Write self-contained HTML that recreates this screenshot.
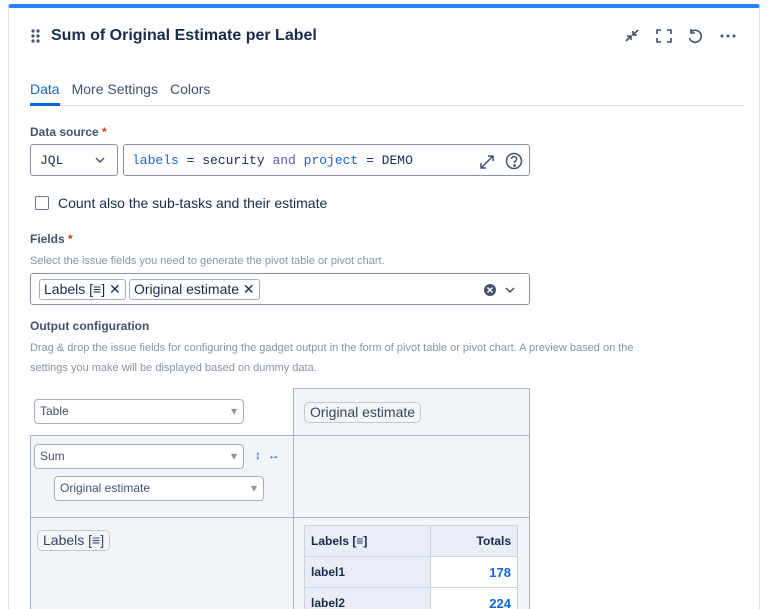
<!DOCTYPE html>
<html style="width:768px;height:609px;overflow:hidden"><head><meta charset="utf-8"><style>
*{box-sizing:border-box;margin:0;padding:0}
body{width:768px;height:609px;overflow:hidden;background:#fff;font-family:"Liberation Sans",sans-serif;color:#172b4d;position:relative}
.card{position:absolute;left:8px;top:4px;width:752px;height:605px;border:1px solid #dfe1e6;border-bottom:none;border-top:4px solid #2684ff;border-radius:3px 3px 0 0;background:#fff}
.abs{position:absolute}
.title{left:51px;top:27px;font-size:16px;font-weight:bold;color:#172b4d}
.tabs{left:30px;top:81px;font-size:14px;color:#42526e}
.tabs span{margin-right:12px}
.tabline{left:30px;top:105px;width:714px;height:1px;background:#dfe1e6}
.lbl{font-size:12px;font-weight:bold;color:#42526e}
.req{color:#de350b}
.box{border:1px solid #8993a4;border-radius:3px;background:#fff}
.mono{font-family:"Liberation Mono",monospace;font-size:13px}
.help{font-size:11px;color:#8993a4;line-height:20px}
.tag{border:1px solid #a5adba;border-radius:3px;padding:0 4px;font-size:14px;color:#172b4d;height:21px;line-height:19px;display:inline-block}
.sel{border:1px solid #a5adba;border-radius:4px;background:#fff;font-size:12px;color:#42526e;padding-left:5px;line-height:23px;height:25px}
.sel::after{content:"▾";position:absolute;right:6px;top:0;color:#8993a4;font-size:12px}
.cell{background:#f1f4f9;border:1px solid #a5b2c8}
.chip{border:1px solid #c1c7d0;border-radius:5px;background:#f4f5f7;font-size:14px;padding:0 5px;height:21px;line-height:19px;color:#344563}
table{border-collapse:collapse;font-size:12px;font-weight:bold}
td{border:1px solid #c8d2e1;height:31px;padding:0 6px}
</style></head><body>
<div class="card"></div>
<div class="abs" style="left:31px;top:29px;width:10px;height:14px">
<svg width="10" height="14"><g fill="#42526e"><circle cx="2" cy="2" r="1.6"/><circle cx="7" cy="2" r="1.6"/><circle cx="2" cy="7" r="1.6"/><circle cx="7" cy="7" r="1.6"/><circle cx="2" cy="12" r="1.6"/><circle cx="7" cy="12" r="1.6"/></g></svg></div>
<div class="abs title">Sum of Original Estimate per Label</div>
<svg class="abs" style="left:622px;top:27px" width="120" height="18" fill="none" stroke="#42526e" stroke-width="1.6">
<path d="M4 14l5-5M5 9h4v4M16 3l-5 5M11 4v4h4"/>
<path d="M35 7V3h4M45 3h4v4M49 11v4h-4M39 15h-4v-4"/>
<path d="M69 5a6 6 0 1 1-1.5 6M69 2v4h4"/>
<g fill="#42526e" stroke="none"><circle cx="100" cy="9" r="1.5"/><circle cx="106" cy="9" r="1.5"/><circle cx="112" cy="9" r="1.5"/></g>
</svg>
<div class="abs tabs"><span style="color:#0c66e4">Data</span><span>More Settings</span><span>Colors</span></div>
<div class="abs tabline"></div>
<div class="abs" style="left:30px;top:103px;width:30px;height:3px;background:#0c66e4"></div>
<div class="abs lbl" style="left:30px;top:125px">Data source <span class="req">*</span></div>
<div class="abs box" style="left:30px;top:144px;width:88px;height:32px"><span class="abs mono" style="left:9px;top:8px">JQL</span><svg class="abs" style="left:64px;top:11px" width="10" height="8"><path d="M1 2l4 4 4-4" fill="none" stroke="#42526e" stroke-width="1.4"/></svg></div>
<div class="abs box" style="left:123px;top:144px;width:407px;height:32px"><span class="abs mono" style="left:8px;top:8px"><span style="color:#0c66e4">labels</span> = security <span style="color:#6554c0">and</span> <span style="color:#0c66e4">project</span> = DEMO</span>
<svg class="abs" style="left:355px;top:7px" width="45" height="18" fill="none" stroke="#42526e" stroke-width="1.5"><path d="M2 16l12-12M9 4h5v5M2 11v5h5"/><circle cx="35" cy="9" r="7.5"/><path d="M32.5 7a2.5 2.5 0 1 1 3 2.5v1.5"/><circle cx="35.5" cy="13.5" r=".6" fill="#42526e"/></svg></div>
<div class="abs" style="left:35px;top:196px;width:14px;height:14px;border:1.5px solid #6b778c;border-radius:2px"></div>
<div class="abs" style="left:58px;top:195px;font-size:14px;color:#172b4d">Count also the sub-tasks and their estimate</div>
<div class="abs lbl" style="left:30px;top:232px">Fields <span class="req">*</span></div>
<div class="abs help" style="left:30px;top:251px">Select the issue fields you need to generate the pivot table or pivot chart.</div>
<div class="abs box" style="left:30px;top:273px;width:500px;height:32px">
<span class="abs tag" style="left:8px;top:5px">Labels [≡] ✕</span>
<span class="abs tag" style="left:98px;top:5px">Original estimate ✕</span>
<svg class="abs" style="left:452px;top:9px" width="40" height="14"><circle cx="7" cy="7" r="6" fill="#42526e"/><path d="M4.5 4.5l5 5M9.5 4.5l-5 5" stroke="#fff" stroke-width="1.4"/><path d="M23 5l4 4 4-4" fill="none" stroke="#42526e" stroke-width="1.5"/></svg></div>
<div class="abs lbl" style="left:30px;top:319px">Output configuration</div>
<div class="abs help" style="left:30px;top:338px;width:640px">Drag &amp; drop the issue fields for configuring the gadget output in the form of pivot table or pivot chart. A preview based on the settings you make will be displayed based on dummy data.</div>
<div class="abs cell" style="left:293px;top:388px;width:237px;height:48px"></div>
<div class="abs cell" style="left:30px;top:435px;width:264px;height:83px"></div>
<div class="abs cell" style="left:293px;top:435px;width:237px;height:83px"></div>
<div class="abs cell" style="left:30px;top:517px;width:264px;height:92px;border-bottom:none"></div>
<div class="abs cell" style="left:293px;top:517px;width:237px;height:92px;border-bottom:none"></div>
<div class="abs sel" style="left:34px;top:399px;width:210px">Table</div>
<div class="abs chip" style="left:304px;top:402px">Original estimate</div>
<div class="abs sel" style="left:34px;top:444px;width:210px">Sum</div>
<div class="abs" style="left:255px;top:448px;font-size:12px;color:#0c66e4">↕ &nbsp;↔</div>
<div class="abs sel" style="left:54px;top:476px;width:210px">Original estimate</div>
<div class="abs chip" style="left:37px;top:530px">Labels [≡]</div>
<div class="abs" style="left:304px;top:525px;width:214px;height:84px;overflow:hidden">
<table style="width:214px">
<tr style="background:#e9eef6"><td style="width:126px">Labels [≡]</td><td style="text-align:right">Totals</td></tr>
<tr><td style="background:#e9eef6">label1</td><td style="text-align:right;color:#0c66e4;background:#fff;font-size:13px">178</td></tr>
<tr><td style="background:#e9eef6">label2</td><td style="text-align:right;color:#0c66e4;background:#fff;font-size:13px">224</td></tr>
</table></div>
</body></html>
